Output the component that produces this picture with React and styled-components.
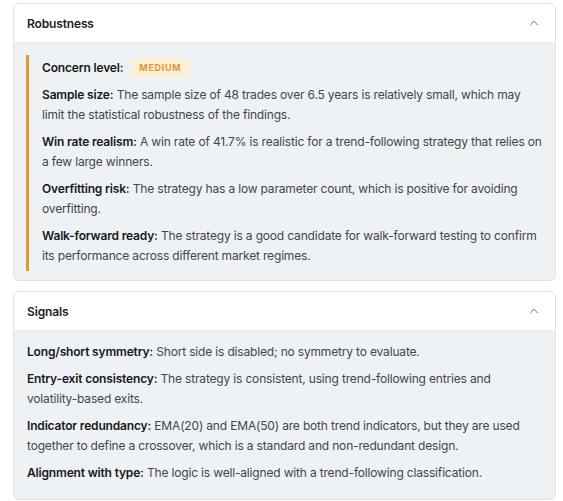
import React from 'react';
import styled, { createGlobalStyle } from 'styled-components';
import { ChevronUp } from 'lucide-react';

const GlobalStyle = createGlobalStyle`
  body {
    margin: 0;
    background: #ffffff;
    font-family: Inter, "Noto Sans", "Liberation Sans", sans-serif;
    color: #3f454c;
  }
`;

const Page = styled.div`
  display: flex;
  flex-direction: column;
  gap: 10px;
  padding: 3px 7px 0 13px;
`;

const Card = styled.section`
  border: 1px solid #dfe3e7;
  border-radius: 6px;
  overflow: hidden;
  background: #eff2f5;
`;

const Header = styled.div`
  display: flex;
  align-items: center;
  justify-content: space-between;
  height: 38px;
  padding: 0 14px 0 13px;
  background: #ffffff;
  border-bottom: 1px solid #e6e9ec;
`;

const Title = styled.h3`
  margin: 0;
  font-size: 12px;
  font-weight: 600;
  letter-spacing: -0.15px;
  color: #1d2125;
`;

const Body = styled.div`
  padding: ${p => (p.$flagged ? '12px 13px 9px 12px' : '11px 13px 16px 13px')};
`;

const List = styled.div`
  display: flex;
  flex-direction: column;
  gap: 7px;
  ${p => p.$flagged && `
    border-left: 3px solid #dc9a2e;
    padding: 3px 0 5px 13px;
  `}
`;

const Item = styled.p`
  margin: 0;
  font-size: 12px;
  line-height: 20px;
  letter-spacing: -0.17px;
  color: #40464d;
`;

const Label = styled.strong`
  font-weight: 600;
  color: #15191d;
`;

const Badge = styled.span`
  display: inline-block;
  margin-left: 8px;
  padding: 0 8px;
  height: 19px;
  line-height: 19px;
  border-radius: 4px;
  background: #fdefd3;
  color: #dc9a38;
  font-size: 9px;
  font-weight: 700;
  letter-spacing: 0.7px;
  vertical-align: 1px;
`;

const robustness = [
  ['Sample size:', 'The sample size of 48 trades over 6.5 years is relatively small, which may limit the statistical robustness of the findings.'],
  ['Win rate realism:', 'A win rate of 41.7% is realistic for a trend-following strategy that relies on a few large winners.'],
  ['Overfitting risk:', 'The strategy has a low parameter count, which is positive for avoiding overfitting.'],
  ['Walk-forward ready:', 'The strategy is a good candidate for walk-forward testing to confirm its performance across different market regimes.'],
];

const signals = [
  ['Long/short symmetry:', 'Short side is disabled; no symmetry to evaluate.'],
  ['Entry-exit consistency:', 'The strategy is consistent, using trend-following entries and volatility-based exits.'],
  ['Indicator redundancy:', 'EMA(20) and EMA(50) are both trend indicators, but they are used together to define a crossover, which is a standard and non-redundant design.'],
  ['Alignment with type:', 'The logic is well-aligned with a trend-following classification.'],
];

function Section({ title, children }) {
  return (
    <Card>
      <Header>
        <Title>{title}</Title>
        <ChevronUp size={14} color="#6b7178" strokeWidth={1.6} />
      </Header>
      {children}
    </Card>
  );
}

export default function App() {
  return (
    <>
      <GlobalStyle />
      <Page>
        <Section title="Robustness">
          <Body $flagged>
            <List $flagged>
              <Item>
                <Label>Concern level:</Label>
                <Badge>MEDIUM</Badge>
              </Item>
              {robustness.map(([k, v]) => (
                <Item key={k}><Label>{k}</Label> {v}</Item>
              ))}
            </List>
          </Body>
        </Section>
        <Section title="Signals">
          <Body>
            <List>
              {signals.map(([k, v]) => (
                <Item key={k}><Label>{k}</Label> {v}</Item>
              ))}
            </List>
          </Body>
        </Section>
      </Page>
    </>
  );
}
